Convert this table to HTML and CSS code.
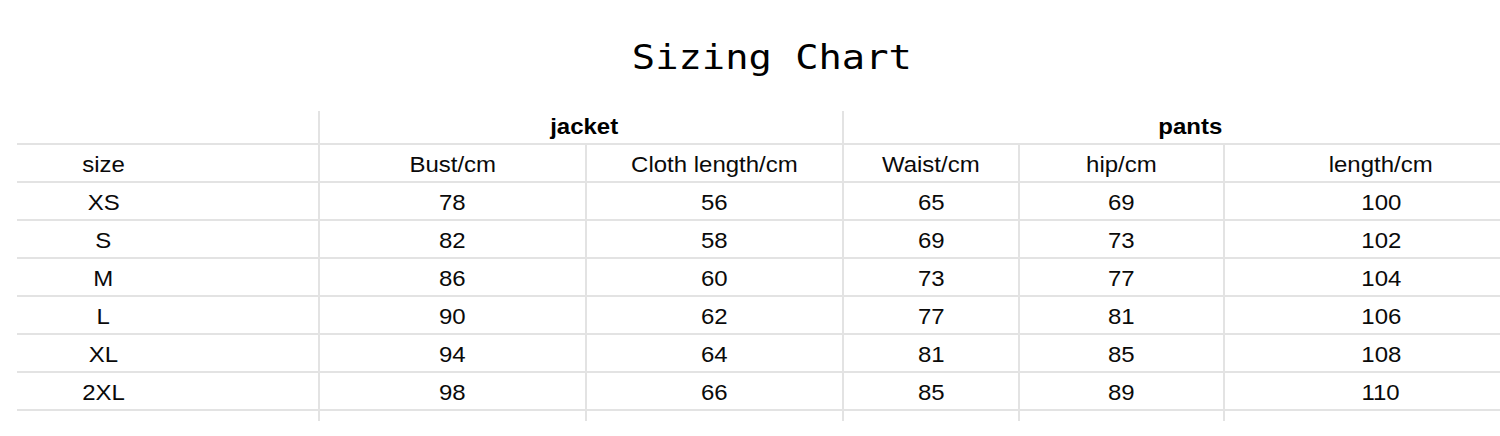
FILE: index.html
```html
<!DOCTYPE html>
<html lang="en">
<head>
<meta charset="utf-8">
<title>Sizing Chart</title>
<link rel="stylesheet" href="styles.css">
</head>
<body>
<div class="page">
  <h1 class="title"><span class="wide-title">Sizing Chart</span></h1>
  <div class="chart">
    <div class="cell group first"></div>
    <div class="cell group span2"><span class="txt">jacket</span></div>
    <div class="cell group span3 last"><span class="txt">pants</span></div>

    <div class="cell first"><span class="txt">size</span></div>
    <div class="cell"><span class="txt">Bust/cm</span></div>
    <div class="cell"><span class="txt">Cloth length/cm</span></div>
    <div class="cell"><span class="txt">Waist/cm</span></div>
    <div class="cell"><span class="txt">hip/cm</span></div>
    <div class="cell last"><span class="txt">length/cm</span></div>

    <div class="cell first"><span class="txt">XS</span></div>
    <div class="cell"><span class="txt">78</span></div>
    <div class="cell"><span class="txt">56</span></div>
    <div class="cell"><span class="txt">65</span></div>
    <div class="cell"><span class="txt">69</span></div>
    <div class="cell last"><span class="txt">100</span></div>

    <div class="cell first"><span class="txt">S</span></div>
    <div class="cell"><span class="txt">82</span></div>
    <div class="cell"><span class="txt">58</span></div>
    <div class="cell"><span class="txt">69</span></div>
    <div class="cell"><span class="txt">73</span></div>
    <div class="cell last"><span class="txt">102</span></div>

    <div class="cell first"><span class="txt">M</span></div>
    <div class="cell"><span class="txt">86</span></div>
    <div class="cell"><span class="txt">60</span></div>
    <div class="cell"><span class="txt">73</span></div>
    <div class="cell"><span class="txt">77</span></div>
    <div class="cell last"><span class="txt">104</span></div>

    <div class="cell first"><span class="txt">L</span></div>
    <div class="cell"><span class="txt">90</span></div>
    <div class="cell"><span class="txt">62</span></div>
    <div class="cell"><span class="txt">77</span></div>
    <div class="cell"><span class="txt">81</span></div>
    <div class="cell last"><span class="txt">106</span></div>

    <div class="cell first"><span class="txt">XL</span></div>
    <div class="cell"><span class="txt">94</span></div>
    <div class="cell"><span class="txt">64</span></div>
    <div class="cell"><span class="txt">81</span></div>
    <div class="cell"><span class="txt">85</span></div>
    <div class="cell last"><span class="txt">108</span></div>

    <div class="cell first"><span class="txt">2XL</span></div>
    <div class="cell"><span class="txt">98</span></div>
    <div class="cell"><span class="txt">66</span></div>
    <div class="cell"><span class="txt">85</span></div>
    <div class="cell"><span class="txt">89</span></div>
    <div class="cell last"><span class="txt">110</span></div>

    <div class="cell tail first"></div>
    <div class="cell tail"></div>
    <div class="cell tail"></div>
    <div class="cell tail"></div>
    <div class="cell tail"></div>
    <div class="cell tail last"></div>
  </div>
</div>
</body>
</html>
```

FILE: styles.css
```css
html, body {
  margin: 0;
  padding: 0;
  background: #ffffff;
}

body {
  width: 1500px;
  height: 436px;
  overflow: hidden;
}

.page {
  width: 1500px;
  overflow: hidden;
}

.title {
  margin: 37px 0 0 0;
  padding-left: 44px;
  height: 40px;
  line-height: 40px;
  font-family: "DejaVu Sans Mono", monospace;
  font-size: 34px;
  font-weight: normal;
  color: #000000;
  text-align: center;
}

.wide-title {
  display: inline-block;
  transform: scaleX(1.14);
}

.chart {
  margin: 34px 0 0 17px;
  width: 1520px;
  display: grid;
  grid-template-columns: 303px 267px 257px 176px 205px 312px;
  grid-template-rows: 34px repeat(7, 38px) 10px;
  font-family: "Liberation Sans", Arial, sans-serif;
  font-size: 22px;
  color: #0a0a0a;
}

.cell {
  box-sizing: border-box;
  border-right: 2px solid #e3e3e3;
  border-bottom: 2px solid #e3e3e3;
  text-align: center;
  line-height: 30px;
  padding-top: 5px;
  white-space: nowrap;
}

.cell.first {
  padding-right: 128px;
}

.cell.last {
  border-right: none;
}

.cell.group {
  line-height: 32px;
  padding-top: 0;
  font-weight: bold;
  color: #000000;
}

.cell.span2 {
  grid-column: span 2;
  padding-left: 6px;
}

.cell.span3 {
  grid-column: span 3;
}

.cell.tail {
  border-bottom: none;
  padding: 0;
}

.txt {
  display: inline-block;
  transform: scaleX(1.09);
}
```
